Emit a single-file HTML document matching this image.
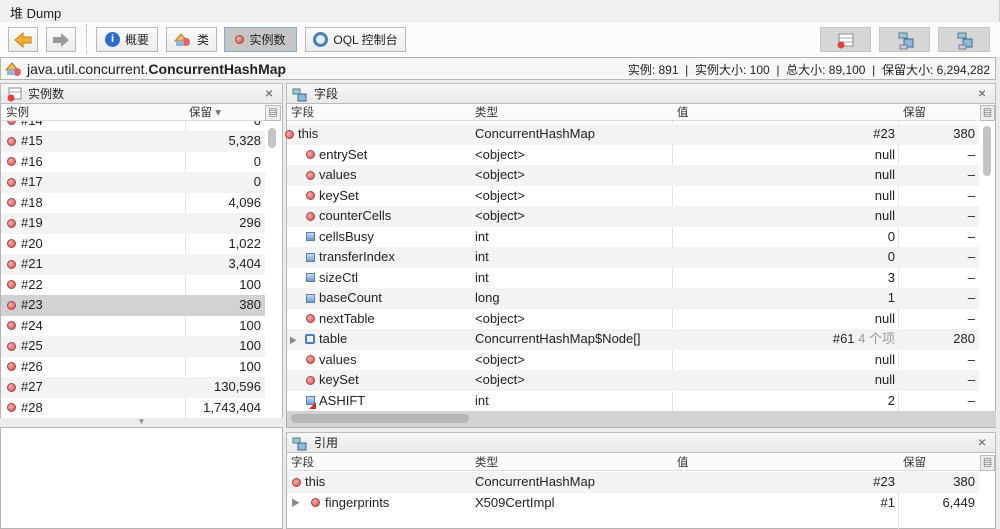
<!DOCTYPE html>
<html><head><meta charset="utf-8"><style>
*{margin:0;padding:0;box-sizing:border-box}
body{width:1000px;height:529px;overflow:hidden;background:#ececec;font-family:"Liberation Sans","Noto Sans CJK SC",sans-serif;font-size:13px;color:#222;position:relative}
.a{position:absolute}
.btn{position:absolute;top:27px;height:25px;border:1px solid #b8b8b8;background:linear-gradient(#fbfbfb,#ececec);font-size:12px;display:flex;align-items:center;justify-content:center;gap:5px}
.rbtn{position:absolute;top:27px;height:25px;border:1px solid #c4c4c4;background:#d6d6d6}
.dot{display:inline-block;width:9px;height:9px;border-radius:50%;background:radial-gradient(circle at 35% 35%,#f7b0b0,#d24848);border:1px solid #b04040}
.sq{display:inline-block;width:9px;height:9px;background:linear-gradient(#c8dcf2,#6e9ccc);border:1px solid #5580b0}
.row{position:absolute;height:20.5px;line-height:20.5px;font-size:13px}
.g{background:#f3f3f3}
.hdr{position:absolute;height:21px;background:linear-gradient(#f7f7f7,#e9e9e9);border:1px solid #bcbcbc;font-size:12px;line-height:20px}
.ch{position:absolute;font-size:11.5px;color:#333;height:16px;line-height:16px}
.r{text-align:right}
.x{position:absolute;font-size:14px;color:#555}
</style></head><body>
<div class="a" style="left:0;top:0;width:1000px;height:22px;background:#f0f0f0;border-right:1px solid #ccc"></div>
<div class="a" style="left:10px;top:3px;font-size:13px">堆 Dump</div>
<div class="a" style="left:0;top:22px;width:1000px;height:35px;background:#fbfbfb"></div>
<div class="btn" style="left:8px;width:30px"><svg width="18" height="16"><path d="M1 8 L9 1 V5 H17 V11 H9 V15 Z" fill="#f3b13a" stroke="#c47d10"/></svg></div>
<div class="btn" style="left:46px;width:30px"><svg width="18" height="16"><path d="M17 8 L9 1 V5 H1 V11 H9 V15 Z" fill="#9a9a9a"/></svg></div>
<div class="a" style="left:86px;top:24px;height:30px;border-left:1px dotted #aaa"></div>
<div class="btn" style="left:96px;width:62px"><span style="display:inline-block;width:15px;height:15px;border-radius:50%;background:#2a6fc9;color:#fff;font-size:11px;font-weight:bold;text-align:center;line-height:15px">i</span>概要</div>
<div class="btn" style="left:166px;width:51px"><svg width="18" height="15"><path d="M1 9 L7 2 L13 9 Z" fill="#f3c060" stroke="#b07a20"/><circle cx="12" cy="10" r="4" fill="#e86060"/><rect x="2" y="9" width="8" height="5" fill="#8fb8e0"/></svg>类</div>
<div class="btn" style="left:224px;width:73px;background:#c6c6c6;border-color:#8aa8d0"><span class="dot"></span> 实例数</div>
<div class="btn" style="left:305px;width:101px"><span style="display:inline-block;width:15px;height:15px;border-radius:50%;border:3px solid #4b7fb8;background:#e0ecf8"></span>OQL 控制台</div>
<div class="rbtn" style="left:820px;width:51px"><svg width="51" height="25"><rect x="18" y="6" width="14" height="12" fill="#fff" stroke="#888"/><line x1="18" y1="10" x2="32" y2="10" stroke="#aaa"/><line x1="18" y1="14" x2="32" y2="14" stroke="#aaa"/><circle cx="20" cy="17" r="3.5" fill="#e04040"/></svg></div>
<div class="rbtn" style="left:879px;width:51px"><svg width="51" height="25"><rect x="19" y="5" width="8" height="5" fill="#9cc" stroke="#579"/><rect x="24" y="11" width="9" height="8" fill="#8bd" stroke="#468"/><rect x="20" y="17" width="7" height="4" fill="#ccd" stroke="#779"/></svg></div>
<div class="rbtn" style="left:938px;width:52px"><svg width="52" height="25"><rect x="19" y="5" width="8" height="5" fill="#9cc" stroke="#579"/><rect x="24" y="11" width="9" height="8" fill="#8bd" stroke="#468"/><rect x="20" y="17" width="7" height="4" fill="#ccd" stroke="#779"/></svg></div>
<div class="a" style="left:0;top:57px;width:996px;height:23px;border:1px solid #b4b4b4;background:#f7f7f7"></div>
<svg class="a" style="left:5px;top:61px" width="18" height="16"><path d="M1 9 L7 2 L13 9 Z" fill="#f3c060" stroke="#b07a20"/><circle cx="12" cy="11" r="4" fill="#e86060"/><rect x="2" y="9" width="8" height="5" fill="#8fb8e0"/></svg>
<div class="a" style="left:27px;top:61px;font-size:14px">java.util.concurrent.<b>ConcurrentHashMap</b></div>
<div class="a" style="right:10px;top:61px;font-size:12px">实例: 891 &nbsp;| &nbsp;实例大小: 100 &nbsp;| &nbsp;总大小: 89,100 &nbsp;| &nbsp;保留大小: 6,294,282</div>

<!-- left panel -->
<div class="a" style="left:0;top:83px;width:283px;height:337px;background:#fff;border:1px solid #b4b4b4"></div>
<div class="a" style="left:185px;top:121px;height:298px;border-left:1px solid #dde4ee"></div>
<div class="a" style="left:268px;top:128px;width:8px;height:20px;border-radius:4px;background:#c4c4c4"></div>
<div id="L"></div>
<div class="hdr" style="left:0;top:83px;width:283px;padding-left:27px">实例数</div>
<svg class="a" style="left:6px;top:87px" width="16" height="15"><rect x="3" y="1" width="12" height="11" fill="#fff" stroke="#889"/><line x1="3" y1="5" x2="15" y2="5" stroke="#aab"/><circle cx="5" cy="11" r="3.5" fill="#e04040"/></svg>
<div class="x" style="left:265px;top:85px">×</div>
<div class="a" style="left:1px;top:104px;width:264px;height:17px;background:#fafafa;border-bottom:1px solid #ddd"></div>
<div class="ch" style="left:6px;top:105px">实例</div>
<div class="ch" style="left:189px;top:105px">保留 <span style="color:#777">▾</span></div>
<div class="a" style="left:265px;top:105px;width:16px;height:16px;border:1px solid #bbb;background:#eee;font-size:9px;text-align:center;line-height:14px">▤</div>
<div class="a" style="left:0;top:418px;width:283px;height:9px;background:#ececec;font-size:8px;text-align:center;color:#888;line-height:8px">▼</div>
<div class="a" style="left:0;top:427px;width:283px;height:102px;background:#fff;border:1px solid #b4b4b4"></div>

<!-- right panel -->
<div class="a" style="left:286px;top:83px;width:710px;height:345px;background:#fff;border:1px solid #b4b4b4"></div>
<div class="hdr" style="left:286px;top:83px;width:710px;padding-left:27px">字段</div>
<svg class="a" style="left:291px;top:87px" width="18" height="15"><rect x="2" y="2" width="7" height="5" fill="#9cc" stroke="#579"/><rect x="7" y="7" width="8" height="7" fill="#8bd" stroke="#468"/></svg>
<div class="x" style="left:978px;top:85px">×</div>
<div class="a" style="left:287px;top:105px;width:692px;height:16px;background:#fafafa;border-bottom:1px solid #ddd"></div>
<div class="ch" style="left:291px;top:105px">字段</div><div class="ch" style="left:475px;top:105px">类型</div><div class="ch" style="left:677px;top:105px">值</div><div class="ch" style="left:903px;top:105px">保留</div>
<div class="a" style="left:980px;top:105px;width:15px;height:16px;border:1px solid #bbb;background:#eee;font-size:9px;text-align:center;line-height:14px">▤</div>
<div class="a" style="left:672px;top:121px;height:290px;border-left:1px solid #dde4ee"></div>
<div class="a" style="left:898px;top:121px;height:290px;border-left:1px solid #dde4ee"></div>
<div class="a" style="left:983px;top:126px;width:8px;height:50px;border-radius:4px;background:#c4c4c4"></div>
<div id="R"></div>
<div class="a" style="left:287px;top:411px;width:709px;height:16px;background:#d2d2d2"></div>
<div class="a" style="left:291px;top:414px;width:178px;height:9px;border-radius:5px;background:#b6b6b6"></div>

<div class="a" style="left:286px;top:432px;width:710px;height:97px;background:#fff;border:1px solid #b4b4b4"></div>
<div class="hdr" style="left:286px;top:432px;width:710px;padding-left:27px">引用</div>
<svg class="a" style="left:291px;top:436px" width="18" height="15"><rect x="2" y="2" width="7" height="5" fill="#9cc" stroke="#579"/><rect x="7" y="7" width="8" height="7" fill="#8bd" stroke="#468"/></svg>
<div class="x" style="left:978px;top:434px">×</div>
<div class="a" style="left:287px;top:454px;width:692px;height:17px;background:#fafafa;border-bottom:1px solid #ddd"></div>
<div class="ch" style="left:291px;top:455px">字段</div><div class="ch" style="left:475px;top:455px">类型</div><div class="ch" style="left:677px;top:455px">值</div><div class="ch" style="left:903px;top:455px">保留</div>
<div class="a" style="left:980px;top:455px;width:15px;height:16px;border:1px solid #bbb;background:#eee;font-size:9px;text-align:center;line-height:14px">▤</div>
<div class="a" style="left:898px;top:471px;height:58px;border-left:1px solid #dde4ee"></div>
<div class="row g" style="left:287px;top:472px;width:692px"></div>
<span class="dot a" style="left:292px;top:478px"></span><div class="row" style="left:305px;top:472px">this</div>
<div class="row" style="left:475px;top:472px">ConcurrentHashMap</div>
<div class="row r" style="left:680px;top:472px;width:215px">#23</div><div class="row r" style="left:900px;top:472px;width:75px">380</div>
<div class="a" style="left:291px;top:496px;font-size:9px;color:#888">▶</div>
<span class="dot a" style="left:311px;top:498px"></span><div class="row" style="left:325px;top:493px">fingerprints</div>
<div class="row" style="left:475px;top:493px">X509CertImpl</div>
<div class="row r" style="left:680px;top:493px;width:215px">#1</div><div class="row r" style="left:900px;top:493px;width:75px">6,449</div>

<script>
var L=[["#14","0"],["#15","5,328"],["#16","0"],["#17","0"],["#18","4,096"],["#19","296"],["#20","1,022"],["#21","3,404"],["#22","100"],["#23","380"],["#24","100"],["#25","100"],["#26","100"],["#27","130,596"],["#28","1,743,404"]];
var h='';
L.forEach(function(r,i){var y=110.5+i*20.5;var bg=i==9?'background:#d2d2d2':(i%2==1?'background:#f3f3f3':'');
h+='<div class="row" style="left:1px;top:'+y+'px;width:264px;'+bg+'"></div><span class="dot a" style="left:7px;top:'+(y+5.5)+'px"></span><div class="row" style="left:21px;top:'+y+'px">'+r[0]+'</div><div class="row r" style="left:186px;top:'+y+'px;width:75px">'+r[1]+'</div>';});
document.getElementById('L').innerHTML=h;
var R=[["this","ConcurrentHashMap","#23","380","d",0],["entrySet","&lt;object&gt;","null","–","d",1],["values","&lt;object&gt;","null","–","d",1],["keySet","&lt;object&gt;","null","–","d",1],["counterCells","&lt;object&gt;","null","–","d",1],["cellsBusy","int","0","–","s",1],["transferIndex","int","0","–","s",1],["sizeCtl","int","3","–","s",1],["baseCount","long","1","–","s",1],["nextTable","&lt;object&gt;","null","–","d",1],["table","ConcurrentHashMap$Node[]","#61 <span style=\"color:#999\">4 个项</span>","280","a",1],["values","&lt;object&gt;","null","–","d",1],["keySet","&lt;object&gt;","null","–","d",1],["ASHIFT","int","2","–","s",1]];
h='';
R.forEach(function(r,i){var y=124+i*20.5;var bg=i%2==0?'background:#f3f3f3':'';
var ix=r[5]?306:285;
var ic=r[4]=='d'?'<span class="dot a" style="left:'+ix+'px;top:'+(y+5.5)+'px"></span>':(r[4]=='s'?'<span class="sq a" style="left:'+ix+'px;top:'+(y+5.5)+'px"></span>':'<span class="a" style="left:305px;top:'+(y+5)+'px;width:10px;height:10px;border:2px solid #4a80c0;border-radius:2px"></span><span class="a" style="left:289px;top:'+(y+6)+'px;font-size:8px;color:#888">▶</span>');
if(i==13)ic+='<span class="a" style="left:309px;top:'+(y+11)+'px;width:0;height:0;border-left:7px solid transparent;border-bottom:7px solid #d03030"></span>';
h+='<div class="row" style="left:287px;top:'+y+'px;width:692px;'+bg+'"></div>'+ic+'<div class="row" style="left:'+(r[5]?319:298)+'px;top:'+y+'px">'+r[0]+'</div><div class="row" style="left:475px;top:'+y+'px">'+r[1]+'</div><div class="row r" style="left:680px;top:'+y+'px;width:215px">'+r[2]+'</div><div class="row r" style="left:900px;top:'+y+'px;width:75px">'+r[3]+'</div>';});
document.getElementById('R').innerHTML=h;
</script>
</body></html>
